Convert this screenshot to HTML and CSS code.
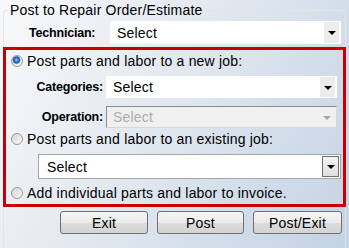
FILE: index.html
```html
<!DOCTYPE html>
<html>
<head>
<meta charset="utf-8">
<link rel="stylesheet" href="styles.css">
</head>
<body>
<fieldset class="group">
  <legend class="group-title">Post to Repair Order/Estimate</legend>
  <div class="field tech-row">
    <span class="lbl tech-lbl">Technician:</span>
    <div class="combo">
      <span class="combo-text">Select</span>
      <span class="combo-btn"><span class="arrow"></span></span>
    </div>
  </div>
  <div class="redbox">
    <div class="opt opt1">
      <span class="radio checked"></span>
      <span class="opt-text">Post parts and labor to a new job:</span>
    </div>
    <div class="field cat-row">
      <span class="lbl side-lbl">Categories:</span>
      <div class="combo">
        <span class="combo-text">Select</span>
        <span class="combo-btn"><span class="arrow"></span></span>
      </div>
    </div>
    <div class="field op-row">
      <span class="lbl side-lbl">Operation:</span>
      <div class="combo disabled">
        <span class="combo-text">Select</span>
        <span class="combo-btn"><span class="arrow"></span></span>
      </div>
    </div>
    <div class="opt opt2">
      <span class="radio"></span>
      <span class="opt-text">Post parts and labor to an existing job:</span>
    </div>
    <div class="combo framed">
      <span class="combo-text">Select</span>
      <span class="combo-btn"><span class="arrow"></span></span>
    </div>
    <div class="opt opt3">
      <span class="radio"></span>
      <span class="opt-text">Add individual parts and labor to invoice.</span>
    </div>
  </div>
  <div class="buttons">
    <button class="btn">Exit</button>
    <button class="btn">Post</button>
    <button class="btn">Post/Exit</button>
  </div>
</fieldset>
</body>
</html>
```
FILE: styles.css
```css
html, body {
  margin: 0;
  padding: 0;
}
body {
  width: 349px;
  height: 248px;
  overflow: hidden;
  background: linear-gradient(120deg, #f8f9fb 0%, #e2e8ef 45%, #c3d3e5 100%);
  font-family: "Liberation Sans", Arial, sans-serif;
  color: #000;
}
.group {
  margin: 2px 3px 0 3px;
  padding: 0;
  border: 1px solid #dfe5ec;
  border-bottom: none;
  border-radius: 4px 4px 0 0;
  min-width: 0;
  height: 246px;
  box-sizing: border-box;
}
.group-title {
  margin-left: 4px;
  padding: 0 2px;
  font-size: 14px;
  line-height: 16px;
  letter-spacing: 0.2px;
}
.field {
  display: flex;
  align-items: center;
}
.tech-row {
  margin-top: 3px;
}
.lbl {
  font-size: 12.5px;
  font-weight: bold;
  letter-spacing: -0.2px;
}
.tech-lbl {
  width: 106px;
  padding-left: 25px;
  box-sizing: border-box;
}
.combo {
  width: 231px;
  height: 23px;
  background: #fff;
  display: flex;
  align-items: center;
  justify-content: space-between;
  box-sizing: border-box;
  padding: 1px 2px 1px 7px;
}
.combo-text {
  font-size: 14px;
  letter-spacing: 0.2px;
}
.combo-btn {
  width: 15px;
  height: 100%;
  background: #ececec;
  display: flex;
  align-items: center;
  justify-content: center;
  box-sizing: border-box;
}
.arrow {
  width: 0;
  height: 0;
  border-left: 4px solid transparent;
  border-right: 4px solid transparent;
  border-top: 4px solid #000;
  margin-top: 1px;
}
.redbox {
  margin: 3px -1px 0 -1px;
  border: 3px solid #c40000;
  height: 160px;
  box-sizing: border-box;
}
.opt {
  display: flex;
  align-items: center;
  height: 22px;
  padding-left: 5px;
}
.opt3 {
  height: 21px;
  margin-top: 3px;
}
.opt-text {
  font-size: 14px;
  letter-spacing: 0.2px;
  margin-left: 4px;
}
.radio {
  width: 12px;
  height: 12px;
  border-radius: 50%;
  box-sizing: border-box;
  border: 1px solid #9a9a9a;
  background: linear-gradient(135deg, #cfcfcf 0%, #ececec 60%, #fbfbfb 100%);
}
.radio.checked {
  background:
    radial-gradient(circle at 45% 40%, #9fd0ff 0, #3b86e0 1.6px, #1f56b8 3px, #6b8fc0 3.7px, transparent 4.2px),
    linear-gradient(135deg, #cfcfcf 0%, #ececec 60%, #fbfbfb 100%);
}
.side-lbl {
  width: 100px;
  text-align: right;
  padding-right: 3px;
  box-sizing: border-box;
}
.cat-row {
  margin-top: 4px;
  height: 22px;
}
.cat-row .combo {
  height: 22px;
}
.op-row {
  margin-top: 8px;
  height: 22px;
}
.combo.disabled {
  height: 22px;
  background: #f0f0f0;
  border-top: 1px solid #8c8c8c;
  border-left: 1px solid #8c8c8c;
  border-right: 1px solid #d8d8d8;
  border-bottom: 1px solid #d8d8d8;
  padding-left: 6px;
}
.combo.disabled .combo-text {
  color: #acacac;
}
.combo.disabled .combo-btn {
  background: #f0f0f0;
}
.combo.disabled .arrow {
  border-top-color: #a8a8a8;
}
.combo.framed {
  width: 303px;
  height: 25px;
  margin: 4px 0 0 32px;
  border: 1px solid #a6a6a6;
  padding: 1px 1px 1px 8px;
}
.combo.framed .combo-btn {
  width: 17px;
  height: 21px;
  border: 1px solid #707070;
  background: linear-gradient(#f4f4f4, #e0e0e0);
}
.buttons {
  display: grid;
  grid-template-columns: 88px 87px 89px;
  column-gap: 9px;
  margin: 4px 0 0 56px;
}
.btn {
  height: 23px;
  margin: 0;
  padding: 0;
  border: 1px solid #707070;
  border-radius: 3px;
  background: linear-gradient(#f5f5f5 0%, #ebebeb 50%, #dcdcdc 51%, #d4d4d4 100%);
  font-family: "Liberation Sans", Arial, sans-serif;
  font-size: 14px;
  letter-spacing: 0.2px;
  color: #000;
}
```
